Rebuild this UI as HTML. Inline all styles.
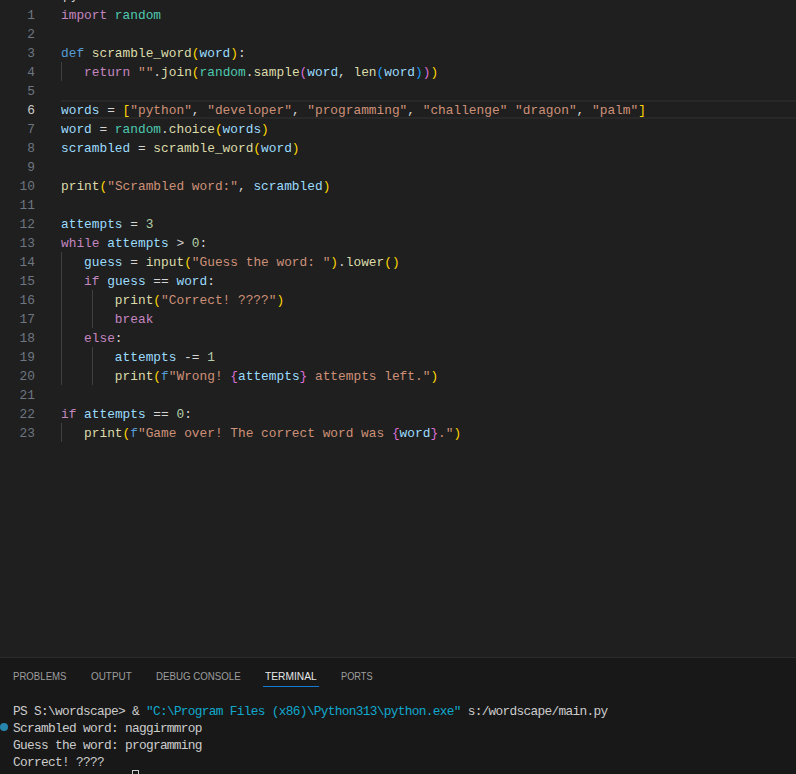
<!DOCTYPE html>
<html lang="en">
<head>
<meta charset="utf-8">
<title>main.py - wordscape</title>
<style>
html,body{margin:0;padding:0;}
body{width:796px;height:774px;overflow:hidden;background:#1f1f1f;position:relative;font-family:"Liberation Mono",monospace;}
#editor{position:absolute;left:0;top:0;width:796px;height:657px;background:#1f1f1f;overflow:hidden;}
.ln{position:absolute;left:0;margin-top:1px;width:796px;height:19px;line-height:19px;font-size:13.4px;white-space:pre;color:#d4d4d4;}
.ln .n{position:absolute;left:0;top:0;width:35px;text-align:right;color:#6e7681;transform:scaleX(0.9575);transform-origin:100% 0;}
.ln .c{position:absolute;left:61px;top:0;transform:scaleX(0.9575);transform-origin:0 0;}
.ln.cur .n{color:#cccccc;}
.hl{position:absolute;left:61px;top:100px;width:735px;height:15px;border-top:2px solid #282828;border-bottom:2px solid #282828;}
.g{position:absolute;width:1px;background:#404040;}
.k{color:#c586c0}.d{color:#569cd6}.f{color:#dcdcaa}.v{color:#9cdcfe}.s{color:#ce9178}.m{color:#4ec9b0}.nu{color:#b5cea8}
.b1{color:#ffd700}.b2{color:#da70d6}.b3{color:#179fff}
#panel{position:absolute;left:0;top:657px;width:796px;height:117px;background:#181818;border-top:1px solid #2b2b2b;box-sizing:border-box;overflow:hidden;}
.tab{position:absolute;top:10px;height:16px;line-height:16px;transform-origin:0 0;font-family:"Liberation Sans",sans-serif;font-size:11px;color:#9d9d9d;white-space:pre;}
.tab.act{color:#e7e7e7;}
.ul{position:absolute;left:263px;top:28px;width:56px;height:1px;background:#127bd3;}
.tl{position:absolute;left:13px;height:17px;line-height:17px;font-size:13.4px;letter-spacing:-0.731px;color:#cccccc;white-space:pre;transform:scaleX(0.9575);transform-origin:0 0;}
.cy{color:#11a8cd}
.dot{position:absolute;left:0px;top:64.8px;width:8px;height:8px;border-radius:50%;background:#2686ae;}
.cursor{position:absolute;left:132px;top:112px;width:5px;height:14px;border:1px solid #cccccc;}
</style>
</head>
<body>
<div id="editor">
<div class="hl"></div>
<div class="g" style="left:61px;top:62px;height:19px"></div>
<div class="g" style="left:61px;top:252px;height:133px"></div>
<div class="g" style="left:92px;top:290px;height:38px"></div>
<div class="g" style="left:92px;top:347px;height:38px"></div>
<div class="g" style="left:61px;top:423px;height:19px"></div>
<div class="ln" style="top:-15px"><span class="c" style="left:62.5px">py</span></div>
<div class="ln" style="top:5px"><span class="n">1</span><span class="c"><span class="k">import</span> <span class="m">random</span></span></div>
<div class="ln" style="top:24px"><span class="n">2</span><span class="c"></span></div>
<div class="ln" style="top:43px"><span class="n">3</span><span class="c"><span class="d">def</span> <span class="f">scramble_word</span><span class="b1">(</span><span class="v">word</span><span class="b1">)</span>:</span></div>
<div class="ln" style="top:62px"><span class="n">4</span><span class="c">   <span class="k">return</span> <span class="s">""</span>.<span class="f">join</span><span class="b1">(</span><span class="m">random</span>.<span class="f">sample</span><span class="b2">(</span><span class="v">word</span>, <span class="f">len</span><span class="b3">(</span><span class="v">word</span><span class="b3">)</span><span class="b2">)</span><span class="b1">)</span></span></div>
<div class="ln" style="top:81px"><span class="n">5</span><span class="c"></span></div>
<div class="ln cur" style="top:100px"><span class="n">6</span><span class="c"><span class="v">words</span> = <span class="b1">[</span><span class="s">"python"</span>, <span class="s">"developer"</span>, <span class="s">"programming"</span>, <span class="s">"challenge"</span> <span class="s">"dragon"</span>, <span class="s">"palm"</span><span class="b1">]</span></span></div>
<div class="ln" style="top:119px"><span class="n">7</span><span class="c"><span class="v">word</span> = <span class="m">random</span>.<span class="f">choice</span><span class="b1">(</span><span class="v">words</span><span class="b1">)</span></span></div>
<div class="ln" style="top:138px"><span class="n">8</span><span class="c"><span class="v">scrambled</span> = <span class="f">scramble_word</span><span class="b1">(</span><span class="v">word</span><span class="b1">)</span></span></div>
<div class="ln" style="top:157px"><span class="n">9</span><span class="c"></span></div>
<div class="ln" style="top:176px"><span class="n">10</span><span class="c"><span class="f">print</span><span class="b1">(</span><span class="s">"Scrambled word:"</span>, <span class="v">scrambled</span><span class="b1">)</span></span></div>
<div class="ln" style="top:195px"><span class="n">11</span><span class="c"></span></div>
<div class="ln" style="top:214px"><span class="n">12</span><span class="c"><span class="v">attempts</span> = <span class="nu">3</span></span></div>
<div class="ln" style="top:233px"><span class="n">13</span><span class="c"><span class="k">while</span> <span class="v">attempts</span> &gt; <span class="nu">0</span>:</span></div>
<div class="ln" style="top:252px"><span class="n">14</span><span class="c">   <span class="v">guess</span> = <span class="f">input</span><span class="b1">(</span><span class="s">"Guess the word: "</span><span class="b1">)</span>.<span class="f">lower</span><span class="b1">()</span></span></div>
<div class="ln" style="top:271px"><span class="n">15</span><span class="c">   <span class="k">if</span> <span class="v">guess</span> == <span class="v">word</span>:</span></div>
<div class="ln" style="top:290px"><span class="n">16</span><span class="c">       <span class="f">print</span><span class="b1">(</span><span class="s">"Correct! ????"</span><span class="b1">)</span></span></div>
<div class="ln" style="top:309px"><span class="n">17</span><span class="c">       <span class="k">break</span></span></div>
<div class="ln" style="top:328px"><span class="n">18</span><span class="c">   <span class="k">else</span>:</span></div>
<div class="ln" style="top:347px"><span class="n">19</span><span class="c">       <span class="v">attempts</span> -= <span class="nu">1</span></span></div>
<div class="ln" style="top:366px"><span class="n">20</span><span class="c">       <span class="f">print</span><span class="b1">(</span><span class="d">f</span><span class="s">"Wrong! </span><span class="b2">{</span><span class="v">attempts</span><span class="b2">}</span><span class="s"> attempts left."</span><span class="b1">)</span></span></div>
<div class="ln" style="top:385px"><span class="n">21</span><span class="c"></span></div>
<div class="ln" style="top:404px"><span class="n">22</span><span class="c"><span class="k">if</span> <span class="v">attempts</span> == <span class="nu">0</span>:</span></div>
<div class="ln" style="top:423px"><span class="n">23</span><span class="c">   <span class="f">print</span><span class="b1">(</span><span class="d">f</span><span class="s">"Game over! The correct word was </span><span class="b2">{</span><span class="v">word</span><span class="b2">}</span><span class="s">."</span><span class="b1">)</span></span></div>
</div>
<div id="panel">
<div class="tab" style="left:13px;transform:scaleX(0.875)">PROBLEMS</div>
<div class="tab" style="left:91px;transform:scaleX(0.90)">OUTPUT</div>
<div class="tab" style="left:156px;transform:scaleX(0.883)">DEBUG CONSOLE</div>
<div class="tab act" style="left:265px;transform:scaleX(0.928)">TERMINAL</div>
<div class="tab" style="left:341px;transform:scaleX(0.84)">PORTS</div>
<div class="ul"></div>
<div class="tl" style="top:45px">PS S:\wordscape&gt; &amp; <span class="cy">"C:\Program Files (x86)\Python313\python.exe"</span> s:/wordscape/main.py</div>
<div class="dot"></div>
<div class="tl" style="top:62px">Scrambled word: naggirmmrop</div>
<div class="tl" style="top:79px">Guess the word: programming</div>
<div class="tl" style="top:96px">Correct! ????</div>
<div class="tl" style="top:113px">PS S:\wordscape&gt; </div>
<div class="cursor"></div>
</div>
</body>
</html>
